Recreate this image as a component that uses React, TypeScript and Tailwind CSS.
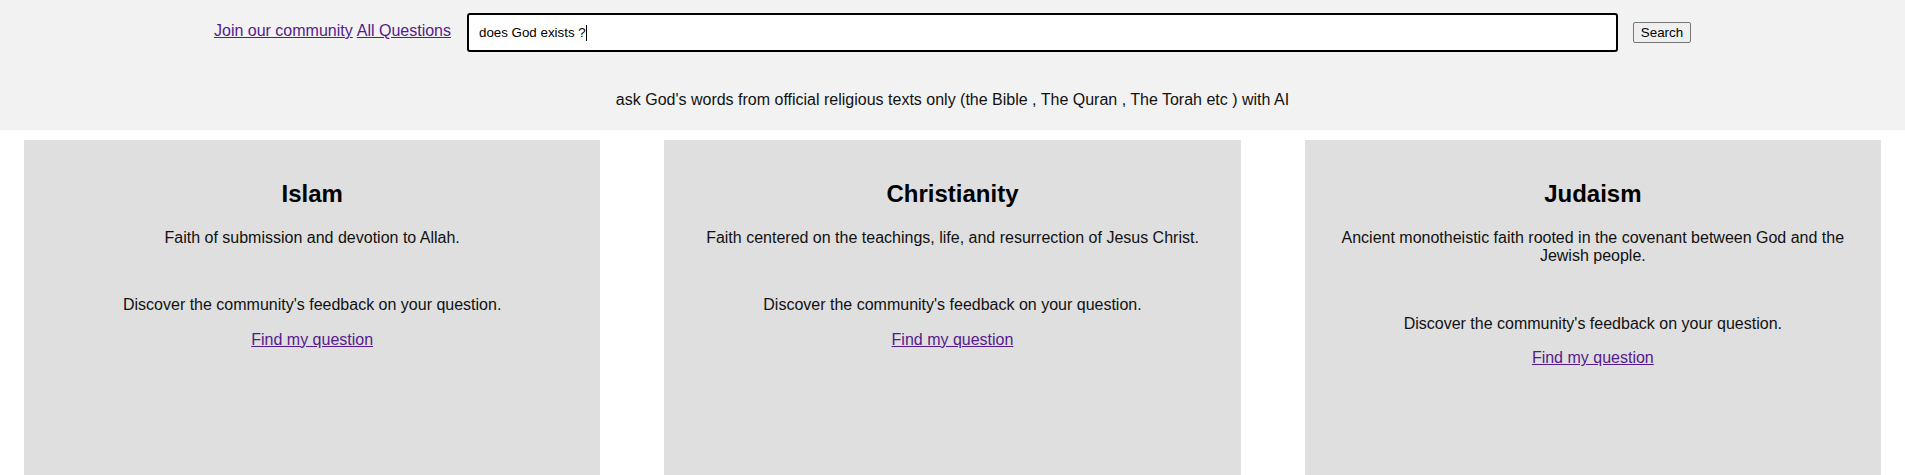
import React from "react";

const religions = [
  {
    name: "Islam",
    desc: "Faith of submission and devotion to Allah.",
  },
  {
    name: "Christianity",
    desc: "Faith centered on the teachings, life, and resurrection of Jesus Christ.",
  },
  {
    name: "Judaism",
    desc: "Ancient monotheistic faith rooted in the covenant between God and the Jewish people.",
  },
];

export default function App() {
  return (
    <div className="min-h-[475px] bg-white font-['Liberation_Sans',Arial,sans-serif] text-black">
      <header className="bg-[#f2f2f2] pt-[13px] pb-[21px]">
        <div className="flex items-center justify-center">
          <nav className="mb-[3px] flex items-center gap-[4px] text-[16px] leading-[18px]">
            <a href="#" className="text-[#551a8b] underline">
              Join our community
            </a>
            <a href="#" className="text-[#551a8b] underline">
              All Questions
            </a>
          </nav>
          <div className="relative ml-[16px]">
            <input
              autoFocus
              defaultValue="does God exists ?"
              className="h-[39px] w-[1151px] rounded-[3px] border-2 border-black bg-white pl-[10px] text-[13.33px] text-black outline-none caret-black"
            />
            <span className="pointer-events-none absolute left-[119px] top-[12px] h-[16px] w-px bg-black" />
          </div>
          <button className="ml-[15px] h-[21px] w-[58px] rounded-[2px] border border-[#767676] bg-[#efefef] text-[13.33px] leading-[15px] text-black">
            Search
          </button>
        </div>
        <p className="mt-[39px] text-center text-[16px] leading-[18.4px] text-[#111]">
          ask God's words from official religious texts only (the Bible , The Quran , The Torah etc ) with AI
        </p>
      </header>
      <main className="mt-[10px] grid grid-cols-3 gap-[64px] px-[24px]">
        {religions.map((r) => (
          <section
            key={r.name}
            className="h-[400px] bg-[#dfdfdf] px-[20px] pt-[40px] text-center"
          >
            <h2 className="text-[24px] font-bold leading-[27.6px] text-black">
              {r.name}
            </h2>
            <p className="mt-[21px] text-[16px] leading-[18.4px] text-[#111]">
              {r.desc}
            </p>
            <p className="mt-[49px] text-[16px] leading-[18.4px] text-[#111]">
              Discover the community's feedback on your question.
            </p>
            <p className="mt-[16px] text-[16px] leading-[18.4px]">
              <a href="#" className="text-[#551a8b] underline">
                Find my question
              </a>
            </p>
          </section>
        ))}
      </main>
    </div>
  );
}
